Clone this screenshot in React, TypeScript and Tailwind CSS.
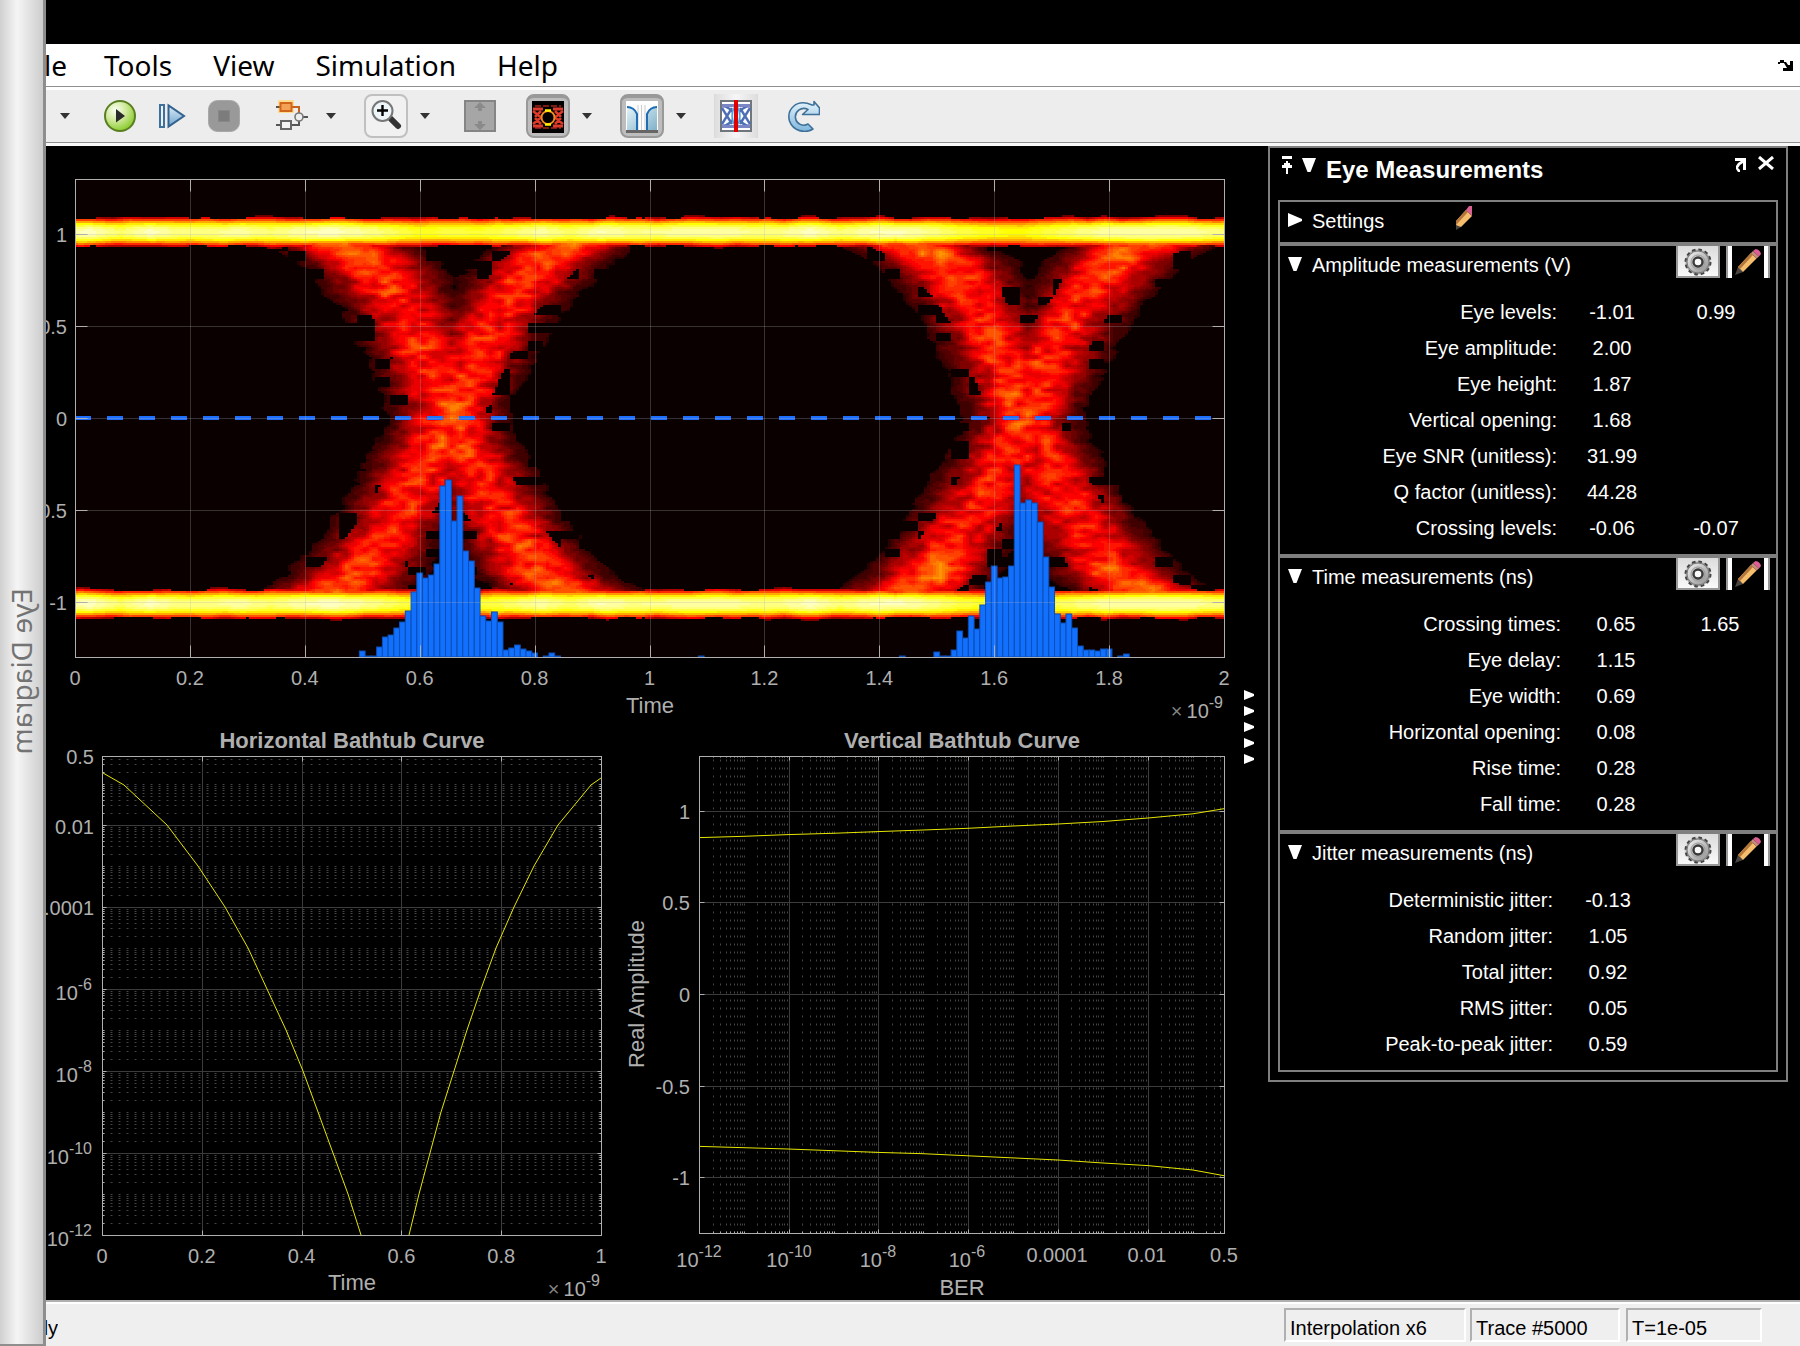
import React, { useState } from 'react';

/* ---------- eye diagram data ---------- */

const PLOT = { left: 75, top: 179, width: 1149, height: 478, zero: 418, unit: 184 };
const UNIT_TIME = 574.5;

const FALLING: [number, number][] = [
    [1, 0.42], [0.92, 0.47], [0.85, 0.515], [0.5, 0.585], [0, 0.65], [-0.5, 0.735], [-0.85, 0.81], [-0.92, 0.85], [-1, 0.91],
];
const RISING: [number, number][] = [
    [1, 0.9], [0.92, 0.85], [0.85, 0.81], [0.5, 0.725], [0, 0.65], [-0.5, 0.565], [-0.85, 0.49], [-0.92, 0.46], [-1, 0.42],
];

const interpolate = (points: [number, number][], y: number) => {
    if (y >= points[0][0]) return points[0][1];
    for (let i = 1; i < points.length; i++) {
        const [y0, t0] = points[i - 1];
        const [y1, t1] = points[i];
        if (y >= y1) return t0 + ((y0 - y) / (y0 - y1)) * (t1 - t0);
    }
    return points[points.length - 1][1];
};

const hash = (i: number, j: number) => {
    let h = Math.imul(i + 1013, 374761393) + Math.imul(j + 571, 668265263);
    h = Math.imul(h ^ (h >>> 13), 1274126177);
    return ((h ^ (h >>> 16)) >>> 0) / 4294967295;
};

const noise = (x: number, y: number) => {
    const i = Math.floor(x);
    const j = Math.floor(y);
    const fx = x - i;
    const fy = y - j;
    const a = hash(i, j) * (1 - fx) + hash(i + 1, j) * fx;
    const b = hash(i, j + 1) * (1 - fx) + hash(i + 1, j + 1) * fx;
    return a * (1 - fy) + b * fy;
};

const density = (px: number, py: number) => {
    const t = ((px - PLOT.left) / UNIT_TIME) % 1;
    const y = (PLOT.zero - py) / PLOT.unit;
    const n = noise(px / 9.6, py / 4.7);
    const broad = noise(px / 26 + 400, py / 14 + 90);

    const level = y > 0 ? 1.01 : -1.01;
    const outer = Math.abs(y) > 1.01;
    const half = 0.078 + 0.012 * noise(px / 16, outer ? 31 : 57);
    const u = Math.abs(y - level) / half;
    const dip = 0.1 * Math.exp(-(((t - 0.66) / 0.14) ** 2));
    const notched = u > 0.88 && hash(Math.floor(px / 19), y > 0 ? 7 : 3) < 0.4;
    const band = u < 1 && !notched ? (0.85 - dip + 0.1 * noise(px / 30, 5)) * (1 - 0.82 * u ** 2.2) : 0;
    if (outer) return band;

    const depth = Math.max(0, Math.abs(y) - 0.65) / 0.35;
    const spread = 0.054 + 0.014 * y * y;
    const f = Math.exp(-0.5 * ((t - interpolate(FALLING, y)) / spread) ** 2);
    const r = Math.exp(-0.5 * ((t - interpolate(RISING, y)) / spread) ** 2);
    const raw = (0.4 + 0.15 * depth) * Math.max(f, r) + 0.05 * Math.min(f, r);
    let v = raw * (0.8 + 0.2 * n + 0.2 * broad) + 0.17 * (n - 0.5) * Math.min(1, raw * 3) * (1 - 0.6 * depth);
    if (raw < 0.24 && hash(Math.floor(px / 17), Math.floor(py / 9)) < 0.2) v = 0;
    return Math.max(band, v < 0.07 ? 0 : v);
};

const LEVELS = 32;

const hotColor = (v: number) => {
    const c = (x: number) => Math.round(255 * Math.min(1, Math.max(0, x)));
    return `rgb(${c(v / 0.375)},${c((v - 0.375) / 0.375)},${c((v - 0.75) / 0.25)})`;
};

// One path per colour level, with equal neighbours merged into runs.
const HEATMAP = (() => {
    const paths: string[] = Array(LEVELS + 1).fill('');
    const w = 3;
    const h = 2;
    for (let y = PLOT.top + 30; y < PLOT.top + PLOT.height - 20; y += h) {
        let start = PLOT.left;
        let current = 0;
        for (let x = PLOT.left; x <= PLOT.left + PLOT.width; x += w) {
            const done = x >= PLOT.left + PLOT.width;
            const q = done ? -1 : Math.round(Math.min(1, density(x + 1, y + 1)) * LEVELS);
            if (q !== current) {
                if (current > 0) paths[current] += `M${start} ${y}h${x - start}v${h}H${start}z`;
                start = x;
                current = q;
            }
        }
    }
    return paths.map((d, i) => ({ d, fill: hotColor(i / LEVELS) })).filter((p) => p.d);
})();

const HISTOGRAM = [
    { start: 0.495, bars: [6, 1, 1, 10, 20, 22, 29, 35, 46, 65, 84, 79, 82, 93, 171, 177, 136, 161, 106, 96, 69, 41, 36, 45, 35, 7, 9, 12, 8, 6, 4, 0, 1, 4, 1] },
    { start: 1.085, bars: [1] },
    { start: 1.435, bars: [1] },
    { start: 1.495, bars: [5, 1, 1, 7, 26, 19, 41, 28, 52, 75, 91, 79, 80, 91, 192, 154, 157, 154, 135, 100, 70, 43, 34, 43, 29, 11, 7, 7, 6, 8, 8, 0, 1, 3] },
];

/* ---------- charts ---------- */

const CHART_TEXT = 'fill-[#afafaf] font-["Liberation_Sans",Arial,sans-serif]';

interface PowerProps {
    x: number;
    y: number;
    exp: string;
    anchor?: 'start' | 'middle' | 'end';
    times?: boolean;
}

const Power: React.FC<PowerProps> = ({ x, y, exp, anchor = 'end', times }) => (
    <text x={x} y={y} textAnchor={anchor} fontSize={20}>
        {times && <tspan fillOpacity={0.75}>×</tspan>}
        <tspan dx={times ? 4 : 0}>10</tspan>
        <tspan dy={-10} fontSize={16}>{exp}</tspan>
    </text>
);

const EyeChart = () => {
    const { left, top, width, height } = PLOT;
    const right = left + width;
    const bottom = top + height;
    const xs = [1, 2, 3, 4, 5, 6, 7, 8, 9].map((i) => Math.round(left + i * 114.9));
    const ys = [1, 0.5, 0, -0.5, -1].map((v) => Math.round(PLOT.zero - v * PLOT.unit));
    return (
        <svg viewBox="46 146 1192 580" className={`w-full ${CHART_TEXT}`} role="img" aria-label="Eye diagram">
            <rect x={left} y={top} width={width} height={height} fill="#0a0000" />
            <g shapeRendering="crispEdges">
                {HEATMAP.map((p) => <path key={p.fill} d={p.d} fill={p.fill} />)}
            </g>
            <path d={`M${left} ${PLOT.zero}H${right}`} stroke="#1f6fff" strokeWidth={4} strokeDasharray="16 16" />
            {HISTOGRAM.map(({ start, bars }) =>
                bars.map((h, i) => h > 0 && (
                    <rect
                        key={`${start}-${i}`}
                        x={left + (start + i * 0.01) * UNIT_TIME}
                        y={bottom - h}
                        width={5.75}
                        height={h}
                        fill="#1270ff"
                        stroke="#0c4fb4"
                        strokeWidth={1}
                    />
                )),
            )}
            <g stroke="#afafaf" strokeOpacity={0.28} transform="translate(.5 .5)">
                {xs.map((x) => <path key={x} d={`M${x} ${top}V${bottom}`} />)}
                {ys.map((y) => <path key={y} d={`M${left} ${y}H${right}`} />)}
            </g>
            <g stroke="#afafaf" fill="none" transform="translate(.5 .5)">
                <rect x={left} y={top} width={width} height={height} />
                {xs.map((x) => <path key={x} d={`M${x} ${top}v12M${x} ${bottom}v-12`} />)}
                {ys.map((y) => <path key={y} d={`M${left} ${y}h12M${right} ${y}h-12`} />)}
            </g>
            <g fontSize={20} textAnchor="end">
                {['1', '0.5', '0', '-0.5', '-1'].map((label, i) => (
                    <text key={label} x={67} y={ys[i] + 8}>{label}</text>
                ))}
            </g>
            <g fontSize={20} textAnchor="middle">
                {['0', '0.2', '0.4', '0.6', '0.8', '1', '1.2', '1.4', '1.6', '1.8', '2'].map((label, i) => (
                    <text key={label} x={left + i * 114.9} y={685}>{label}</text>
                ))}
            </g>
            <text x={650} y={713} fontSize={22} textAnchor="middle">Time</text>
            <Power x={1223} y={718} exp="-9" times />
        </svg>
    );
};

const MANTISSAS = [2, 3, 4, 5, 6, 7, 8, 9];

// Minor positions of a log axis from 1e-12 to 0.5, in decades above 1e-12.
const MINOR_DECADES = Array.from({ length: 12 }, (_, d) => MANTISSAS.map((m) => d + Math.log10(m)))
    .flat()
    .concat([1, 3, 5, 7, 9, 11])
    .filter((v) => v < 11.68);

const HorizontalBathtub = () => {
    const left = 102;
    const right = 601;
    const top = 756;
    const bottom = 1235;
    const xs = [1, 2, 3, 4].map((i) => Math.round(left + i * 99.8));
    const minor = MINOR_DECADES.map((v) => Math.round(bottom - v * 41));
    const major = [10, 8, 6, 4, 2].map((v) => bottom - v * 41);
    return (
        <svg viewBox="46 726 574 574" className={`w-full ${CHART_TEXT}`} role="img" aria-label="Horizontal bathtub curve">
            <text x={352} y={748} fontSize={22} fontWeight={700} textAnchor="middle">Horizontal Bathtub Curve</text>
            <g stroke="#444" strokeDasharray="2 6" transform="translate(.5 .5)">
                {minor.map((y) => <path key={y} d={`M${left} ${y}H${right}`} />)}
            </g>
            <g stroke="#3c3c3c" transform="translate(.5 .5)">
                {xs.map((x) => <path key={x} d={`M${x} ${top}V${bottom}`} />)}
                {major.map((y) => <path key={y} d={`M${left} ${y}H${right}`} />)}
            </g>
            <g stroke="#afafaf" fill="none" transform="translate(.5 .5)">
                <rect x={left} y={top} width={right - left} height={bottom - top} />
                {xs.map((x) => <path key={x} d={`M${x} ${top}v5M${x} ${bottom}v-5`} />)}
                {major.map((y) => <path key={y} d={`M${left} ${y}h4M${right} ${y}h-4`} />)}
                {minor.map((y) => <path key={y} d={`M${left} ${y}h2M${right} ${y}h-2`} />)}
            </g>
            <g stroke="#e6e600" fill="none" strokeWidth={1}>
                <path d="M103 773L124 785L167 825L198 866L225 907L248 948L267 989L286 1030L303 1071L318 1112L333 1153L348 1194L361 1235" />
                <path d="M601 778L591 785L558 825L534 866L514 907L496 948L481 989L467 1030L454 1071L441 1112L430 1153L419 1194L409 1235" />
            </g>
            <g fontSize={20} textAnchor="end">
                <text x={94} y={764}>0.5</text>
                <text x={94} y={834}>0.01</text>
                <text x={94} y={915}>0.0001</text>
            </g>
            <Power x={92} y={1000} exp="-6" />
            <Power x={92} y={1082} exp="-8" />
            <Power x={92} y={1164} exp="-10" />
            <Power x={92} y={1246} exp="-12" />
            <g fontSize={20} textAnchor="middle">
                {['0', '0.2', '0.4', '0.6', '0.8', '1'].map((label, i) => (
                    <text key={label} x={left + i * 99.8} y={1263}>{label}</text>
                ))}
            </g>
            <text x={352} y={1290} fontSize={22} textAnchor="middle">Time</text>
            <Power x={600} y={1296} exp="-9" times />
        </svg>
    );
};

const VerticalBathtub = () => {
    const left = 699;
    const right = 1224;
    const top = 756;
    const bottom = 1233;
    const decade = 44.87;
    const minor = MINOR_DECADES.map((v) => Math.round(left + v * decade));
    const major = [2, 4, 6, 8, 10].map((v) => Math.round(left + v * decade));
    const ys = [811, 902, 994, 1086, 1177];
    return (
        <svg viewBox="620 726 618 574" className={`w-full ${CHART_TEXT}`} role="img" aria-label="Vertical bathtub curve">
            <text x={962} y={748} fontSize={22} fontWeight={700} textAnchor="middle">Vertical Bathtub Curve</text>
            <g stroke="#444" strokeDasharray="2 6" transform="translate(.5 .5)">
                {minor.map((x) => <path key={x} d={`M${x} ${bottom}V${top}`} />)}
            </g>
            <g stroke="#3c3c3c" transform="translate(.5 .5)">
                {major.map((x) => <path key={x} d={`M${x} ${top}V${bottom}`} />)}
                {ys.map((y) => <path key={y} d={`M${left} ${y}H${right}`} />)}
            </g>
            <g stroke="#afafaf" fill="none" transform="translate(.5 .5)">
                <rect x={left} y={top} width={right - left} height={bottom - top} />
                {major.map((x) => <path key={x} d={`M${x} ${top}v4M${x} ${bottom}v-4`} />)}
                {minor.map((x) => <path key={x} d={`M${x} ${top}v1M${x} ${bottom}v-2`} />)}
                {ys.map((y) => <path key={y} d={`M${left} ${y}h5M${right} ${y}h-5`} />)}
            </g>
            <g stroke="#e6e600" fill="none" strokeWidth={1}>
                <path d="M700 837.6L744 836.3L788 834.6L833 833.3L878 831.6L923 830L968 828.3L1013 826L1058 824L1103 821.5L1148 818L1193 813.8L1224 808.7" />
                <path d="M700 1146.4L744 1147.7L788 1149L833 1150.7L878 1152.4L923 1153.7L968 1155.8L1013 1157.9L1058 1160L1103 1163L1148 1165.6L1193 1170L1224 1175.7" />
            </g>
            <g fontSize={20} textAnchor="end">
                {['1', '0.5', '0', '-0.5', '-1'].map((label, i) => (
                    <text key={label} x={690} y={ys[i] + 8}>{label}</text>
                ))}
            </g>
            <Power x={699} y={1267} exp="-12" anchor="middle" />
            <Power x={789} y={1267} exp="-10" anchor="middle" />
            <Power x={878} y={1267} exp="-8" anchor="middle" />
            <Power x={967} y={1267} exp="-6" anchor="middle" />
            <g fontSize={20} textAnchor="middle">
                <text x={1057} y={1262}>0.0001</text>
                <text x={1147} y={1262}>0.01</text>
                <text x={1224} y={1262}>0.5</text>
            </g>
            <text x={962} y={1295} fontSize={22} textAnchor="middle">BER</text>
            <text transform="translate(644 994) rotate(-90)" fontSize={22} textAnchor="middle">Real Amplitude</text>
        </svg>
    );
};

/* ---------- toolbar ---------- */

const Icon: React.FC<{ children: React.ReactNode }> = ({ children }) => (
    <svg viewBox="0 0 32 32" className="size-8" aria-hidden="true">{children}</svg>
);

const PlayIcon = () => (
    <Icon>
        <defs>
            <radialGradient id="play" cx=".35" cy=".3" r=".8">
                <stop offset="0" stopColor="#fbfef5" />
                <stop offset=".45" stopColor="#cfe99a" />
                <stop offset="1" stopColor="#7cc516" />
            </radialGradient>
        </defs>
        <circle cx="16" cy="16" r="15" fill="url(#play)" stroke="#5a7f22" strokeWidth="2" />
        <path d="M12 9L21 16L12 22.5z" fill="#2a2a2a" />
    </Icon>
);

const StepIcon = () => (
    <Icon>
        <defs>
            <linearGradient id="step" x1="0" y1="0" x2="0" y2="1">
                <stop offset="0" stopColor="#dcebf6" />
                <stop offset="1" stopColor="#6fa6cf" />
            </linearGradient>
        </defs>
        <rect x="4" y="5" width="4" height="22" fill="#e8f2fa" stroke="#3f6f9b" strokeWidth="2" />
        <path d="M12.5 5.5V26.5L28 16z" fill="url(#step)" stroke="#34628e" strokeWidth="2" />
    </Icon>
);

const StopIcon = () => (
    <Icon>
        <rect x="0.5" y="0.5" width="31" height="31" rx="9" fill="#999" stroke="#a8a8a8" />
        <rect x="10.5" y="10.5" width="11" height="11" fill="#7c7c7c" stroke="#888" />
    </Icon>
);

const ModelIcon = () => (
    <Icon>
        <rect x="2" y="0" width="16" height="13" fill="#ffdc90" />
        <path d="M0 7h4M16 7h7v7" stroke="#c8611f" strokeWidth="2" fill="none" />
        <path d="M0 7h3" stroke="#555" strokeWidth="2" />
        <rect x="4.500" y="3" width="11" height="8" fill="#f3a256" stroke="#d0661c" strokeWidth="2" />
        <path d="M0 25h4M15 25h8v-5M27 17h5" stroke="#555" strokeWidth="2" fill="none" />
        <rect x="5" y="21" width="10" height="8" fill="#f4f4f4" stroke="#666" strokeWidth="2" />
        <circle cx="23" cy="17" r="4" fill="#eee" stroke="#777" strokeWidth="1.600" />
    </Icon>
);

const ZoomIcon = () => (
    <Icon>
        <path d="M21 19L28 26" stroke="#333" strokeWidth="6" strokeLinecap="round" />
        <circle cx="12.500" cy="11" r="10" fill="#eef5f9" stroke="#777" strokeWidth="2" />
        <path d="M7 10.500h11M12.500 5v11" stroke="#000" strokeWidth="2.400" />
    </Icon>
);

const ScaleIcon = () => (
    <Icon>
        <rect x="1" y="1" width="30" height="30" fill="#a6a6a6" stroke="#858585" strokeWidth="2" />
        <path d="M16 2l6 6h-4v3h-4v-3h-4zM16 30l6-6h-4v-3h-4v3h-4z" fill="#8a8a8a" />
    </Icon>
);

const EyeIcon = () => (
    <Icon>
        <rect width="32" height="32" fill="#000" />
        <path d="M3 5H29M3 27H29" stroke="#7a1c12" strokeWidth="2" strokeDasharray="6 2" />
        <path d="M1 8H11M21 8H31M1 25H11M21 25H31" stroke="#dc3a2a" strokeWidth="3" />
        <path d="M1 10L9 16.500L1 23M31 10L23 16.500L31 23M9 10L3 16M23 10L29 16M9 23L3 17M23 23L29 17" stroke="#dc3a2a" strokeWidth="2.600" fill="none" />
        <circle cx="16" cy="16.500" r="6.500" fill="#000" stroke="#f08a1c" strokeWidth="2" />
        <path d="M13 9.500h6M13 23.500h6" stroke="#fff200" strokeWidth="2.400" />
    </Icon>
);

const BathtubIcon = () => (
    <Icon>
        <defs>
            <linearGradient id="tub" x1="0" y1="0" x2="1" y2="1">
                <stop offset="0" stopColor="#e4f4f8" />
                <stop offset="1" stopColor="#7fb0c9" />
            </linearGradient>
        </defs>
        <rect width="32" height="32" fill="#fdfdfd" />
        <path d="M1 6Q8 6 11 12V30H1zM31 6Q24 6 21 12V30H31z" fill="url(#tub)" />
        <path d="M12 4V29M15.500 4V29M19 4V29" stroke="#ccc" />
        <path d="M1 6Q8 6 11 13V30M31 6Q24 6 21 13V30" stroke="#1f6db5" strokeWidth="2" fill="none" />
        <rect y="29" width="32" height="3" fill="#666" />
    </Icon>
);

const CenterIcon = () => (
    <Icon>
        <rect x="1" y="1" width="30" height="30" fill="#fff" stroke="#70767e" strokeWidth="2" />
        <path d="M2 6Q9 6 16 16Q23 26 30 26M2 26Q9 26 16 16Q23 6 30 6M2 8L12 24M2 24L12 8M30 8L20 24M30 24L20 8" stroke="#4f6fb5" strokeWidth="2.400" fill="none" />
        <path d="M16 5Q8 16 16 27Q24 16 16 5z" fill="#d6eefb" stroke="#4da3dc" strokeWidth="1.500" />
        <path d="M2 5.500H30M2 26.500H30" stroke="#7b86c4" strokeWidth="3" />
        <rect x="14" width="4" height="32" fill="#e00000" />
    </Icon>
);

const RefreshIcon = () => (
    <Icon>
        <defs>
            <linearGradient id="refresh" x1="0" y1="0" x2="0" y2="1">
                <stop offset="0" stopColor="#e4f3fb" />
                <stop offset="1" stopColor="#7fb6dc" />
            </linearGradient>
        </defs>
        <path d="M26 5V1.500L31.500 8V14.500H14.500L20 9.500C13 6 6.500 12 7.500 18C8.500 24 15 27 20 24L25 29C17 34 5 31 1.500 21C-1.500 10 8 -2 24 5z" fill="url(#refresh)" stroke="#3f7099" strokeWidth="1.600" strokeLinejoin="round" />
    </Icon>
);

interface ToolButtonProps {
    label: string;
    className?: string;
    children: React.ReactNode;
}

const ToolButton: React.FC<ToolButtonProps> = ({ label, className = '', children }) => (
    <button type="button" aria-label={label} title={label} className={`flex size-11 shrink-0 items-center justify-center ${className}`}>
        {children}
    </button>
);

const Caret: React.FC<{ label: string; className: string }> = ({ label, className }) => (
    <button type="button" aria-label={label} className={`flex h-11 w-[10px] shrink-0 items-center justify-center ${className}`}>
        <svg viewBox="0 0 10 6" className="h-[6px] w-[10px]" aria-hidden="true"><path d="M0 0H10L5 6z" fill="#333" /></svg>
    </button>
);

const PRESSED = 'rounded-lg border-2 border-t-4 border-[#999] bg-[#bdbdbd]';

const Toolbar = () => (
    <div role="toolbar" aria-label="Playback and display" className="flex h-[52px] items-center bg-[#ededed]">
        <Caret label="Configuration options" className="ml-[14px]" />
        <ToolButton label="Run" className="ml-7"><PlayIcon /></ToolButton>
        <ToolButton label="Step forward" className="ml-2"><StepIcon /></ToolButton>
        <ToolButton label="Stop" className="ml-2"><StopIcon /></ToolButton>
        <ToolButton label="Highlight block" className="ml-6"><ModelIcon /></ToolButton>
        <Caret label="Highlight options" className="ml-3" />
        <ToolButton label="Zoom in" className="ml-7 rounded-lg border-2 border-[#c0c0c0] bg-[#f1f1f1]"><ZoomIcon /></ToolButton>
        <Caret label="Zoom options" className="ml-3" />
        <ToolButton label="Scale axes" className="ml-7"><ScaleIcon /></ToolButton>
        <ToolButton label="Eye diagram" className={`ml-6 ${PRESSED}`}><EyeIcon /></ToolButton>
        <Caret label="Eye diagram options" className="ml-3" />
        <ToolButton label="Bathtub curves" className={`ml-7 ${PRESSED}`}><BathtubIcon /></ToolButton>
        <Caret label="Bathtub options" className="ml-3" />
        <ToolButton label="Center eye" className="ml-7 border-x border-[#dadada] bg-linear-to-r from-[#dedede] via-[#f6f6f6] to-[#dedede]"><CenterIcon /></ToolButton>
        <ToolButton label="Reset" className="ml-6"><RefreshIcon /></ToolButton>
    </div>
);

const MENUS = ['Tools', 'View', 'Simulation', 'Help'];

const MenuBar = () => (
    <div className="flex h-[42px] items-center bg-white pr-[7px] font-['Noto_Sans',sans-serif] text-[28px] leading-[40px] text-black">
        <nav className="flex gap-[41px]">
            <button type="button" className="-mr-1 flex w-[21px] justify-end overflow-hidden">File</button>
            {MENUS.map((menu) => <button key={menu} type="button">{menu}</button>)}
        </nav>
        <button type="button" aria-label="Dock" className="ml-auto">
            <svg viewBox="0 0 15 11" className="h-[11px] w-[15px]" aria-hidden="true">
                <path d="M0 2H2V0H6V2H8L10 5H12V1H15V11H5V8H9L6 3H2V4H0z" fill="#000" />
            </svg>
        </button>
    </div>
);

/* ---------- measurements panel ---------- */

const GearIcon = () => (
    <svg viewBox="0 0 28 28" className="size-7" aria-hidden="true">
        <defs>
            <linearGradient id="gear" x1="0" y1="0" x2="1" y2="1">
                <stop offset="0" stopColor="#f4f4f4" />
                <stop offset="1" stopColor="#8e8e8e" />
            </linearGradient>
        </defs>
        <circle cx="14" cy="14" r="12.500" fill="#aaa" stroke="#444" strokeWidth="2" strokeDasharray="3.600 2.945" />
        <circle cx="14" cy="14" r="11" fill="url(#gear)" stroke="#777" />
        <circle cx="14" cy="14" r="7" fill="none" stroke="#9a9a9a" />
        <circle cx="14" cy="14" r="4.500" fill="#fafafa" stroke="#3a3a3a" strokeWidth="2.400" />
    </svg>
);

const PencilIcon = () => (
    <svg viewBox="0 0 28 28" className="size-7 shrink-0" aria-hidden="true">
        <path d="M1 27L4 19L9 24z" fill="#4a4440" />
        <path d="M4 19L17 5L22.500 10.500L9 24z" fill="#f5bd6c" />
        <path d="M4 19L17 5L19 7L6 21z" fill="#b4763a" />
        <path d="M17 5L19 3L25 8.500L22.500 10.500z" fill="#c58b7c" />
        <path d="M19 3L21.500 1Q26 1.500 27 6L25 8.500z" fill="#dc5f92" />
    </svg>
);

// Pencil turned steeper, as the narrow settings row shows it.
const SteepPencilIcon = () => (
    <svg viewBox="0 0 16 24" className="h-6 w-4" aria-hidden="true">
        <path d="M0 24V17L5 21z" fill="#4a4440" />
        <path d="M0 15L10 4L16 10L5 21L0 19z" fill="#f5bd6c" />
        <path d="M0 15L10 4L12 6L0 19z" fill="#b4763a" />
        <path d="M10 4L13 0H16V10z" fill="#dc5f92" />
    </svg>
);

const Disclosure: React.FC<{ open: boolean }> = ({ open }) => (
    <svg viewBox="0 0 14 14" className="size-[14px]" aria-hidden="true">
        <path d={open ? 'M0 0H14L8.500 14H5.500z' : 'M0 0L14 6V8L0 14z'} fill="#fff" />
    </svg>
);

interface Measurement {
    label: string;
    values: string[];
}

interface SectionProps {
    title: string;
    rows: Measurement[];
    labelWidth: string;
}

const Section: React.FC<SectionProps> = ({ title, rows, labelWidth }) => {
    const [open, setOpen] = useState(true);
    return (
        <section className="border-2 border-[#7f7f7f]">
            <div className="flex h-[38px] items-start">
                <button type="button" aria-expanded={open} onClick={() => setOpen(!open)} className="flex h-[38px] items-center gap-[10px] pl-2">
                    <span className="pb-[2px]"><Disclosure open={open} /></span>
                    {title}
                </button>
                <button type="button" aria-label={`${title} settings`} className="ml-auto flex h-8 w-11 items-end justify-center border-2 border-t-0 border-[#999] bg-linear-to-b from-[#dcdcdc] to-[#fafafa]">
                    <GearIcon />
                </button>
                <button type="button" aria-label={`Edit ${title}`} className="mr-[6px] ml-[6px] flex h-8 w-11 justify-center border-x-2 border-[#999] bg-white px-1">
                    <span className="flex h-full w-full items-center justify-center bg-black"><PencilIcon /></span>
                </button>
            </div>
            {open && (
                <table className="mt-[10px] mb-2 table-fixed border-collapse">
                    <tbody>
                        {rows.map((row) => (
                            <tr key={row.label} className="h-9">
                                <th scope="row" className={`${labelWidth} text-right font-normal`}>{row.label}</th>
                                <td className="w-[110px] text-center">{row.values[0]}</td>
                                <td className="w-[98px] text-center">{row.values[1]}</td>
                            </tr>
                        ))}
                    </tbody>
                </table>
            )}
        </section>
    );
};

const AMPLITUDE: Measurement[] = [
    { label: 'Eye levels:', values: ['-1.01', '0.99'] },
    { label: 'Eye amplitude:', values: ['2.00'] },
    { label: 'Eye height:', values: ['1.87'] },
    { label: 'Vertical opening:', values: ['1.68'] },
    { label: 'Eye SNR (unitless):', values: ['31.99'] },
    { label: 'Q factor (unitless):', values: ['44.28'] },
    { label: 'Crossing levels:', values: ['-0.06', '-0.07'] },
];

const TIME: Measurement[] = [
    { label: 'Crossing times:', values: ['0.65', '1.65'] },
    { label: 'Eye delay:', values: ['1.15'] },
    { label: 'Eye width:', values: ['0.69'] },
    { label: 'Horizontal opening:', values: ['0.08'] },
    { label: 'Rise time:', values: ['0.28'] },
    { label: 'Fall time:', values: ['0.28'] },
];

const JITTER: Measurement[] = [
    { label: 'Deterministic jitter:', values: ['-0.13'] },
    { label: 'Random jitter:', values: ['1.05'] },
    { label: 'Total jitter:', values: ['0.92'] },
    { label: 'RMS jitter:', values: ['0.05'] },
    { label: 'Peak-to-peak jitter:', values: ['0.59'] },
];

const MeasurementsPanel = () => (
    <aside className="mr-3 w-[520px] shrink-0 self-start border-2 border-[#7f7f7f] px-2 pb-2 text-[20px] leading-6 text-white">
        <div className="flex h-[52px] items-start pt-2">
            <button type="button" aria-label="Pin panel" className="ml-1">
                <svg viewBox="0 0 10 18" className="h-[18px] w-[10px]" aria-hidden="true">
                    <path d="M0 0H10V3H0zM4 5h2v2h2v2h2v3H6v6H4v-6H0V9h2V7h2z" fill="#fff" />
                </svg>
            </button>
            <button type="button" aria-label="Collapse panel" className="mt-[2px] ml-[10px]"><Disclosure open /></button>
            <h2 className="ml-[10px] text-[24px] leading-7 font-bold">Eye Measurements</h2>
            <button type="button" aria-label="Undock panel" className="ml-auto pt-[2px]">
                <svg viewBox="0 0 12 14" className="h-[14px] w-[12px]" aria-hidden="true">
                    <path d="M1 0H12V12H9V5L6 7L4 10L6 12V14H4L2 11V8L4 5L7 3H1z" fill="#fff" />
                </svg>
            </button>
            <button type="button" aria-label="Close panel" className="mr-1 ml-3">
                <svg viewBox="0 0 16 14" className="h-[14px] w-4" aria-hidden="true">
                    <path d="M1 1L15 13M15 1L1 13" stroke="#fff" strokeWidth="3" />
                </svg>
            </button>
        </div>
        <section className="flex h-11 items-start border-2 border-[#7f7f7f]">
            <button type="button" aria-expanded={false} className="flex h-[38px] w-[176px] items-center gap-[10px] pl-2">
                <span className="pb-[2px]"><Disclosure open={false} /></span>
                Settings
            </button>
            <button type="button" aria-label="Edit Settings" className="mt-1">
                <SteepPencilIcon />
            </button>
        </section>
        <Section title="Amplitude measurements (V)" rows={AMPLITUDE} labelWidth="w-[277px]" />
        <Section title="Time measurements (ns)" rows={TIME} labelWidth="w-[281px]" />
        <Section title="Jitter measurements (ns)" rows={JITTER} labelWidth="w-[273px]" />
    </aside>
);

const PanelGrip = () => (
    <button type="button" aria-label="Hide measurements" className="flex w-[30px] shrink-0 flex-col gap-[6px] self-start pt-[544px] pl-[6px]">
        {[0, 1, 2, 3, 4].map((i) => (
            <svg key={i} viewBox="0 0 10 10" className="size-[10px]" aria-hidden="true">
                <path d="M0 0L10 4V6L0 10z" fill="#fff" />
            </svg>
        ))}
    </button>
);

const STATUS_CELL = 'h-[34px] border-2 border-t-[#b0b0b0] border-r-white border-b-white border-l-[#b0b0b0] pt-[6px] pl-1';

const StatusBar = () => (
    <footer className="flex h-[46px] items-start border-t-2 border-[#b0b0b0] bg-[#efefef] text-[20px] leading-6 text-black">
        <div className="flex h-full flex-1 items-start border-t-2 border-white">
            <span className="mt-3 flex h-6 w-3 justify-end overflow-hidden">Ready</span>
            <div className="mt-1 mr-[38px] ml-auto flex">
                <span className={`mr-1 w-[182px] ${STATUS_CELL}`}>Interpolation x6</span>
                <span className={`mr-[6px] w-[150px] ${STATUS_CELL}`}>Trace #5000</span>
                <span className={`w-[136px] ${STATUS_CELL}`}>T=1e-05</span>
            </div>
        </div>
    </footer>
);

export default function App() {
    return (
        <div className="flex min-h-screen bg-black font-['Liberation_Sans',Arial,sans-serif]">
            <div className="flex w-[46px] shrink-0 justify-center border-r-3 border-b-2 border-[#8e8e8e] bg-linear-to-r from-[#d0d0d0] via-[#f5f5f5] via-40% to-[#cdcdcd] pt-[588px] pr-[2px]">
                <span className="h-fit -scale-x-100 font-['Noto_Sans',sans-serif] text-[28px] leading-[36px] whitespace-nowrap text-[#737373] [writing-mode:vertical-rl]">
                    Eye Diagram
                </span>
            </div>
            <div className="flex min-w-0 flex-1 flex-col pt-11">
                <MenuBar />
                <div className="h-1 border-t border-[#8e8e8e] bg-white" />
                <Toolbar />
                <div className="h-1 border-t border-[#8e8e8e] bg-[#f8f8f8]" />
                <main className="flex flex-1">
                    <div className="min-w-0 flex-1">
                        <EyeChart />
                        <div className="grid grid-cols-[574fr_618fr]">
                            <HorizontalBathtub />
                            <VerticalBathtub />
                        </div>
                    </div>
                    <PanelGrip />
                    <MeasurementsPanel />
                </main>
                <StatusBar />
            </div>
        </div>
    );
}
